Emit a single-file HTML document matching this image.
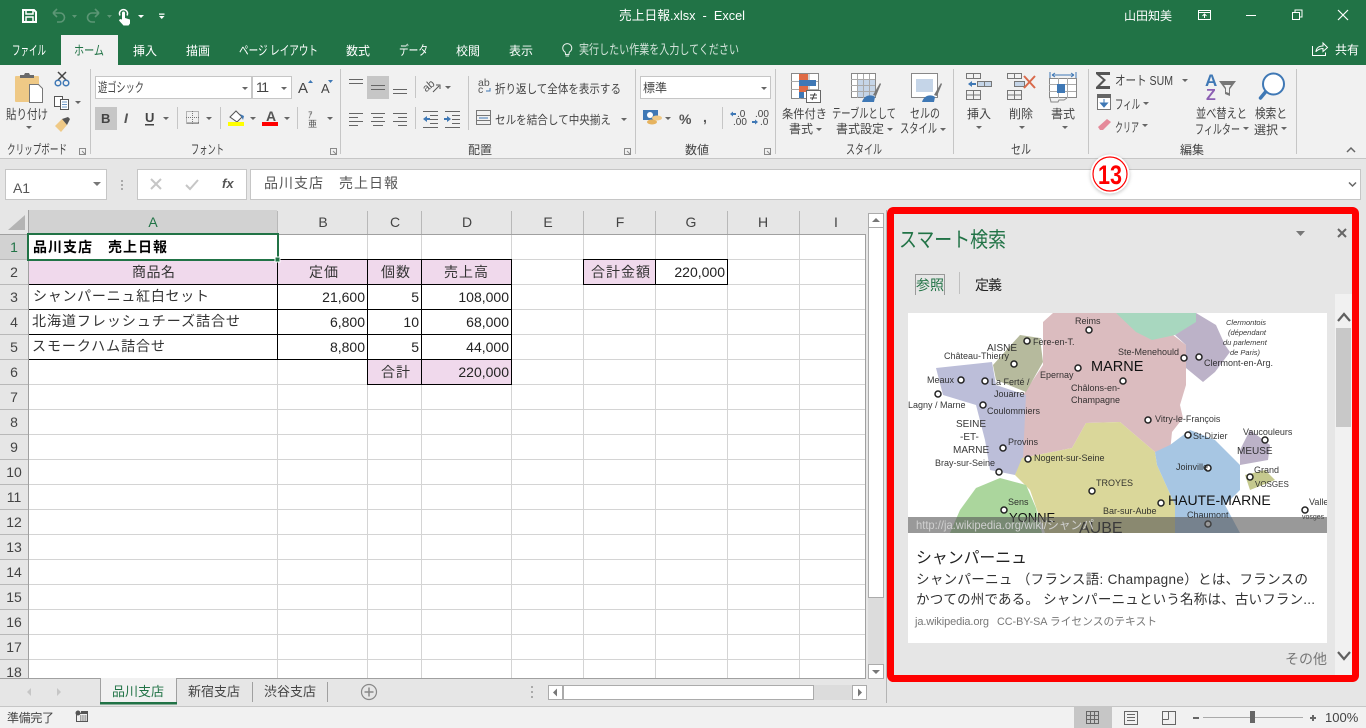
<!DOCTYPE html>
<html lang="ja"><head><meta charset="utf-8"><title>売上日報.xlsx - Excel</title>
<style>
html,body{margin:0;padding:0;width:1366px;height:728px;overflow:hidden;background:#e6e6e6}
svg{display:block;position:absolute;left:0;top:0}
text{font-family:"Liberation Sans","Noto Sans CJK JP",sans-serif;white-space:pre}
.r text{fill:#444;font-size:12px}
.r text.k{font-size:13px}
.c text{fill:#333;font-size:14px}
.n{text-anchor:end;font-size:14px;fill:#222}
.h text{fill:#444;font-size:14px;text-anchor:middle}
.m text{fill:#222;font-size:9px;opacity:.9}
</style></head><body>
<svg width="1366" height="728" viewBox="0 0 1366 728" xmlns="http://www.w3.org/2000/svg">
<defs>
<clipPath id="mapc"><rect x="908" y="313" width="419" height="220"/></clipPath>
<clipPath id="gridc"><rect x="0" y="210" width="866" height="468"/></clipPath>
<filter id="sh" x="-30%" y="-30%" width="160%" height="160%"><feGaussianBlur stdDeviation="1.5"/></filter>
<filter id="bl"><feGaussianBlur stdDeviation="0.35"/></filter>
</defs>
<!-- base -->
<rect width="1366" height="65" fill="#217346"/>
<rect y="65" width="1366" height="93" fill="#f1f1f1"/>
<rect y="158" width="1366" height="1" fill="#c6c6c6"/>
<rect y="159" width="1366" height="547" fill="#e6e6e6"/>

<!-- quick access -->
<g fill="none" stroke="#fff" stroke-width="2">
<path d="M23 10h11l2 2v10H23z"/><path d="M26 10v4h7v-4M26 22v-5h7v5" stroke-width="1.500"/>
</g>
<g fill="none" stroke="#5c9675" stroke-width="1.600">
<path d="M53 13l4-4M53 13l4 4M53 13h7a4.500 4.500 0 0 1 0 9h-3"/>
<path d="M99 13l-4-4M99 13l-4 4M99 13h-7a4.500 4.500 0 0 0 0 9h3"/>
</g>
<path d="M72 15h5l-2.500 3zM107 15h5l-2.500 3z" fill="#5c9675"/>
<path d="M122 13a1.500 1.500 0 0 1 3 0v5l5 1.500v4l-1.500 2h-5l-4.500-5 1-1.500 2 .5z" fill="#fff"/>
<path d="M120 15.500a4 4 0 1 1 7 0" fill="none" stroke="#fff" stroke-width="1.500"/>
<path d="M138 15h6l-3 3zM159 16h5.500l-2.750 3zM159 13.500h5.500v1.200H159z" fill="#fff"/>
<text x="619" y="20" font-size="13" fill="#fff" textLength="126" lengthAdjust="spacingAndGlyphs">売上日報.xlsx  -  Excel</text>
<text x="1124" y="20" font-size="12" fill="#fff" textLength="48">山田知美</text>
<g fill="none" stroke="#fff" stroke-width="1">
<rect x="1198.500" y="10.500" width="12" height="9"/><path d="M1198 12.500h13M1204.500 18v-4M1202.500 16l2-2 2 2"/>
<path d="M1246 15.500h10"/>
<rect x="1292.500" y="12.500" width="7" height="7"/><path d="M1295 12.500v-2.500h7v7h-2.500"/>
<path d="M1338 10l10 10M1348 10l-10 10" stroke-width="1.200"/>
</g>
<!-- tabs -->
<rect x="61" y="35" width="57" height="30" fill="#f1f1f1"/>
<g fill="#fff">
<text x="12" y="55" fill="#fff" font-size="13" textLength="34" lengthAdjust="spacingAndGlyphs">ファイル</text>
<text x="74" y="55" fill="#217346" font-size="13" textLength="30" lengthAdjust="spacingAndGlyphs">ホーム</text>
<text x="133" y="55" fill="#fff" font-size="12" textLength="24">挿入</text>
<text x="186" y="55" fill="#fff" font-size="12" textLength="24">描画</text>
<text x="239" y="55" fill="#fff" font-size="13" textLength="79" lengthAdjust="spacingAndGlyphs">ページ レイアウト</text>
<text x="346" y="55" fill="#fff" font-size="12" textLength="24">数式</text>
<text x="399" y="55" fill="#fff" font-size="13" textLength="29" lengthAdjust="spacingAndGlyphs">データ</text>
<text x="456" y="55" fill="#fff" font-size="12" textLength="24">校閲</text>
<text x="509" y="55" fill="#fff" font-size="12" textLength="24">表示</text>
<text x="579" y="54" fill="#d3e3da" font-size="13" textLength="160" lengthAdjust="spacingAndGlyphs">実行したい作業を入力してください</text>
<text x="1335" y="54" fill="#fff" font-size="12" textLength="24">共有</text>
</g>
<g fill="none" stroke="#e6efe9" stroke-width="1">
<path d="M565 52a4.500 4.500 0 1 1 4.500 0c-.5 .8-.5 1.500-.5 2.500h-3.500c0-1 0-1.700-.5-2.500zM565.500 56h3.500"/>
</g>
<g fill="none" stroke="#fff" stroke-width="1"><path d="M1312.500 46v9.500h13v-3M1316 52c0-4 3-6 7-6v-3l4.500 4.500-4.500 4v-3c-3 0-5 1-7 3z"/></g>

<!-- ribbon separators -->
<g fill="#c6c6c6">
<rect x="90" y="69" width="1" height="85"/><rect x="340" y="69" width="1" height="85"/><rect x="635" y="69" width="1" height="85"/><rect x="775" y="69" width="1" height="85"/><rect x="953" y="69" width="1" height="85"/><rect x="1088" y="69" width="1" height="85"/><rect x="1296" y="69" width="1" height="85"/>
<rect x="177" y="107" width="1" height="22"/><rect x="220" y="107" width="1" height="22"/><rect x="297" y="107" width="1" height="22"/>
<rect x="415" y="76" width="1" height="22"/><rect x="415" y="107" width="1" height="22"/><rect x="468" y="76" width="1" height="54"/><rect x="722" y="107" width="1" height="22"/>
</g>
<!-- clipboard -->
<rect x="15" y="76" width="24" height="26" rx="1" fill="#efc986"/>
<path d="M20 78v-3h4l1-2h4l1 2h4v3z" fill="#6a6a6a"/>
<path d="M29.500 84.500h9l4 4v14h-13z" fill="#fff" stroke="#777"/>
<g fill="none" stroke="#444" stroke-width="1.500"><path d="M58 72l8 8M66 72l-8 8"/></g>
<circle cx="58" cy="83" r="2.800" fill="none" stroke="#3f78b5" stroke-width="1.500"/><circle cx="66" cy="83" r="2.800" fill="none" stroke="#3f78b5" stroke-width="1.500"/>
<g fill="#fff" stroke="#555"><rect x="54.500" y="96.500" width="8" height="10"/><rect x="60.500" y="99.500" width="8" height="10"/></g>
<path d="M62 102h5M62 104.500h5M62 107h5" stroke="#3f78b5" stroke-width=".8"/>
<path d="M75 101h6l-3 3z" fill="#666"/>
<path d="M55 126l7-7 5 6-6 7z" fill="#efc986"/><path d="M62 119l6-2 2 2-3 6z" fill="#555"/>
<g class="r">
<text x="6" y="119" class="k" textLength="42" lengthAdjust="spacingAndGlyphs">貼り付け</text>
<text x="7" y="154" class="k" textLength="60" lengthAdjust="spacingAndGlyphs">クリップボード</text>
<text x="191" y="154" class="k" textLength="33" lengthAdjust="spacingAndGlyphs">フォント</text>
<text x="468" y="154" textLength="24">配置</text>
<text x="685" y="154" textLength="24">数値</text>
<text x="846" y="154" class="k" textLength="36" lengthAdjust="spacingAndGlyphs">スタイル</text>
<text x="1011" y="154" class="k" textLength="20" lengthAdjust="spacingAndGlyphs">セル</text>
<text x="1180" y="154" textLength="24">編集</text>
</g>
<path d="M26 126h6l-3 3z" fill="#666"/>
<g fill="none" stroke="#8a8a8a"><path d="M79.500 148.500h6v6h-6zM82 151l3 3"/><path d="M330.500 148.500h6v6h-6zM333 151l3 3"/><path d="M624.500 148.500h6v6h-6zM627 151l3 3"/><path d="M764.500 148.500h6v6h-6zM767 151l3 3"/></g>

<!-- font -->
<rect x="95.500" y="76.500" width="156" height="22" fill="#fff" stroke="#c6c6c6"/>
<rect x="252.500" y="76.500" width="39" height="22" fill="#fff" stroke="#c6c6c6"/>
<g class="r">
<text x="98" y="92" class="k" textLength="46" lengthAdjust="spacingAndGlyphs">遊ゴシック</text>
<text x="256" y="92" style="font-size:14px" textLength="13">11</text>
<text x="298" y="93" style="font-size:15px" textLength="11">A</text>
<text x="321" y="93" style="font-size:13px" textLength="9">A</text>
</g>
<path d="M242 87h6l-3 3zM281 87h6l-3 3z" fill="#666"/><path d="M308 83h5l-2.500-3zM328 80h5l-2.500 3z" fill="#3f78b5"/>
<rect x="95" y="107" width="22" height="23" fill="#c6c6c6"/>
<text x="101" y="123" font-size="13" font-weight="bold" fill="#444">B</text>
<text x="124" y="123" font-size="14" font-style="italic" font-weight="bold" font-family="Liberation Serif" fill="#555">I</text>
<text x="145" y="122" font-size="13" font-weight="bold" fill="#444">U</text>
<rect x="145" y="124" width="9" height="1.500" fill="#444"/>
<path d="M163 117h6l-3 3zM206 117h6l-3 3zM250 117h6l-3 3zM284 117h6l-3 3zM327 117h6l-3 3z" fill="#666"/>
<rect x="186.500" y="111.500" width="12" height="12" fill="none" stroke="#777" stroke-dasharray="1 1"/><path d="M192.500 111v13M186 117.500h13" stroke="#777" stroke-dasharray="1 1"/><rect x="186" y="122.500" width="13" height="1" fill="#777"/>
<path d="M230 117l6-6 6 6-5 5z" fill="#fff" stroke="#555"/><path d="M240 114l4 2-1 4z" fill="#3f78b5"/>
<rect x="228" y="122" width="16" height="4" fill="#ffff00"/>
<text x="266" y="121" font-size="14" fill="#555" font-weight="bold">A</text>
<rect x="262" y="122" width="16" height="4" fill="#f00"/>
<text x="308" y="118" font-size="9" fill="#555">ｱ</text><text x="308" y="127" font-size="9" fill="#555">亜</text>

<!-- alignment -->
<rect x="367" y="76" width="22" height="23" fill="#c6c6c6"/>
<g fill="none" stroke="#666" stroke-width="1">
<path d="M349 79.500h14M349 83.500h14M371 85.500h14M371 89.500h14M393 89.500h14M393 93.500h14"/>
<path d="M349 113.500h14M349 117.500h9M349 121.500h14M349 125.500h9"/>
<path d="M371 113.500h14M373 117.500h10M371 121.500h14M373 125.500h10"/>
<path d="M393 113.500h14M398 117.500h9M393 121.500h14M398 125.500h9"/>
<path d="M423 111.500h15M430 115.500h8M430 119.500h8M430 123.500h8M423 127.500h15"/>
<path d="M445 111.500h15M452 115.500h8M452 119.500h8M452 123.500h8M445 127.500h15"/>
</g>
<path d="M423 119l4-3v2h3v2h-3v2zM451 119l-4-3v2h-3v2h3v2z" fill="#3f78b5"/>
<text x="423" y="90" font-size="11" fill="#555" transform="rotate(-40 428 87)">ab</text>
<path d="M433 92l6-6M436 85h4v4" fill="none" stroke="#555"/>
<path d="M445 86h6l-3 3zM621 118h6l-3 3z" fill="#666"/>
<text x="478" y="86" font-size="10.500" fill="#555">ab</text><text x="478" y="93" font-size="10.500" fill="#555">c</text><path d="M490 88v3h-4" fill="none" stroke="#3f78b5"/>
<rect x="476.500" y="110.500" width="14" height="14" fill="none" stroke="#777"/><path d="M477 115.500h13M477 120.500h13" stroke="#777"/>
<rect x="478" y="116" width="11" height="4" fill="#f1f1f1"/><path d="M479 118h9" stroke="#3f78b5"/>
<g class="r">
<text x="495" y="93" textLength="126" lengthAdjust="spacingAndGlyphs">折り返して全体を表示する</text>
<text x="495" y="124" textLength="116" lengthAdjust="spacingAndGlyphs">セルを結合して中央揃え</text>
</g>

<!-- number -->
<rect x="640.500" y="76.500" width="130" height="22" fill="#fff" stroke="#c6c6c6"/>
<text x="643" y="92" font-size="12" fill="#444" textLength="24">標準</text>
<path d="M761 87h6l-3 3zM665 117h6l-3 3z" fill="#666"/>
<rect x="643" y="110" width="15" height="10" fill="#3f78b5"/><circle cx="650" cy="115" r="3" fill="#fff"/>
<ellipse cx="652" cy="122" rx="5" ry="2.500" fill="#e6b35f"/><ellipse cx="657" cy="118" rx="5" ry="2.500" fill="#efc986"/>
<text x="679" y="124" font-size="14" fill="#555" font-weight="bold">%</text>
<text x="703" y="122" font-size="14" fill="#555" font-weight="bold">,</text>
<text x="737" y="117" font-size="10" fill="#444">.0</text><text x="733" y="125" font-size="10" fill="#444">.00</text>
<path d="M730 114l3-2.500v1.500h3v2h-3v1.500z" fill="#3f78b5"/>
<text x="755" y="117" font-size="10" fill="#444">.00</text><text x="760" y="125" font-size="10" fill="#444">.0</text>
<path d="M758 122l-3-2.500v1.500h-3v2h3v1.500z" fill="#3f78b5"/>

<!-- styles -->
<rect x="791.500" y="73.500" width="27" height="25" fill="#fff" stroke="#888"/>
<path d="M791 81.500h27M791 89.500h27M800 74v25M809 74v25" stroke="#aaa"/>
<rect x="799" y="74" width="9" height="7" fill="#df6b45"/><rect x="799" y="80" width="17" height="6" fill="#3f78b5"/><rect x="799" y="86" width="9" height="6" fill="#df6b45"/><rect x="799" y="92" width="5" height="6" fill="#3f78b5"/>
<rect x="806.500" y="90.500" width="14" height="12" fill="#fff" stroke="#666"/><path d="M810 95h7M810 98h7M812 100l3-7" stroke="#444" fill="none"/>
<rect x="851.500" y="73.500" width="24" height="24" fill="#fff" stroke="#888"/><rect x="857" y="79" width="18" height="18" fill="#c5d5e8"/><path d="M851 79.500h24M851 85.500h24M851 91.500h24M857.500 74v24M863.500 74v24M869.500 74v24" stroke="#aaa"/>
<path d="M873 95l7-12 1 1-5 12z" fill="#777"/><path d="M862 102c2-7 9-8 13-5l-1 5z" fill="#3f78b5"/>
<rect x="911.500" y="73.500" width="26" height="24" fill="#fff" stroke="#888"/><rect x="916" y="79" width="17" height="13" fill="#c5d5e8"/>
<path d="M934 95l7-12 1 1-5 12z" fill="#777"/><path d="M922 102c2-7 9-8 13-5l-1 5z" fill="#3f78b5"/>
<g class="r">
<text x="782" y="118" textLength="45" lengthAdjust="spacingAndGlyphs">条件付き</text>
<text x="789" y="133" textLength="24">書式</text>
<text x="832" y="118" class="k" textLength="64" lengthAdjust="spacingAndGlyphs">テーブルとして</text>
<text x="836" y="133" textLength="48">書式設定</text>
<text x="910" y="118" class="k" textLength="30" lengthAdjust="spacingAndGlyphs">セルの</text>
<text x="900" y="133" class="k" textLength="37" lengthAdjust="spacingAndGlyphs">スタイル</text>
<text x="967" y="118" textLength="24">挿入</text>
<text x="1009" y="118" textLength="24">削除</text>
<text x="1051" y="118" textLength="24">書式</text>
<text x="1115" y="85" class="k" textLength="58" lengthAdjust="spacingAndGlyphs">オート SUM</text>
<text x="1115" y="109" class="k" textLength="25" lengthAdjust="spacingAndGlyphs">フィル</text>
<text x="1115" y="132" class="k" textLength="24" lengthAdjust="spacingAndGlyphs">クリア</text>
<text x="1196" y="118" class="k" textLength="51" lengthAdjust="spacingAndGlyphs">並べ替えと</text>
<text x="1195" y="134" class="k" textLength="45" lengthAdjust="spacingAndGlyphs">フィルター</text>
<text x="1255" y="118" class="k" textLength="32" lengthAdjust="spacingAndGlyphs">検索と</text>
<text x="1254" y="134" textLength="24">選択</text>
</g>
<g fill="#666"><path d="M816 128h6l-3 3zM887 128h6l-3 3zM940 128h6l-3 3zM976 126h6l-3 3zM1019 126h6l-3 3zM1062 126h6l-3 3zM1182 79h6l-3 3zM1143 102h6l-3 3zM1142 124h6l-3 3zM1243 127h6l-3 3zM1281 127h6l-3 3z"/></g>
<!-- cells icons -->
<g fill="#fff" stroke="#777">
<path d="M966.500 73.500h14v5h-14zM973.500 73.500v5" fill="none"/>
<path d="M966.500 90.500h14v9h-14zM973.500 90v9M966 95h14" fill="none"/>
<rect x="977.500" y="81.500" width="14" height="5" fill="#c5d5e8"/><path d="M984.500 82v4" fill="none"/>
<path d="M1007.500 73.500h14v5h-14zM1014.500 73.500v5" fill="none"/>
<path d="M1007.500 90.500h14v9h-14zM1014.500 90v9M1007 95h14" fill="none"/>
<rect x="1014.500" y="81.500" width="10" height="5" fill="#c5d5e8"/>
</g>
<path d="M968 84l4-3v2h4v2h-4v2z" fill="#3f78b5"/>
<path d="M1024 76l11 12M1035 76l-11 12" stroke="#d9694a" stroke-width="2" fill="none"/>
<rect x="1049.500" y="78.500" width="27" height="19" fill="#fff" stroke="#888"/><path d="M1049 84.500h27M1049 91.500h27M1058.500 78v20M1067.500 78v20" stroke="#aaa"/>
<rect x="1057" y="84" width="8" height="9" fill="#3f78b5"/>
<path d="M1050 98l1 4h7l1-2h5l3-2" fill="none" stroke="#888"/>
<path d="M1050 72v6M1076 72v6M1052 75h22M1052 75l3-2M1052 75l3 2M1074 75l-3-2M1074 75l-3 2" stroke="#3f78b5" fill="none"/>
<!-- editing -->
<path d="M1110 72h-14v2l7 6-7 7v2h14v-3h-10l6-6-6-5h10z" fill="#555"/>
<rect x="1097.500" y="95.500" width="13" height="14" fill="#fff" stroke="#777"/><rect x="1097" y="94" width="14" height="4" fill="#666"/>
<path d="M1104 99v5M1100.500 103l3.500 4 3.500-4z" stroke="#3f78b5" fill="#3f78b5"/>
<path d="M1098 127l9-8 4 3-8 8h-3z" fill="#e58a9a"/>
<text x="1205" y="86" font-size="17" font-weight="bold" fill="#3f78b5">A</text>
<text x="1206" y="100" font-size="16" font-weight="bold" fill="#8c5fb3">Z</text>
<path d="M1219 81h17l-6 8v7l-5-2v-5z" fill="#777"/><path d="M1224 85h7l-2 3v5l-3-1v-4z" fill="#f1f1f1"/>
<circle cx="1273.500" cy="84" r="10.500" fill="#fff" stroke="#3f78b5" stroke-width="2"/>
<path d="M1265.500 92l-5 6" stroke="#3f78b5" stroke-width="3.500" stroke-linecap="round"/>
<path d="M1347 152l4-4 4 4" fill="none" stroke="#666" stroke-width="1.500"/>

<!-- formula bar -->
<rect x="5.500" y="169.500" width="101" height="30" fill="#fff" stroke="#c6c6c6"/>
<rect x="137.500" y="169.500" width="109" height="30" fill="#fff" stroke="#c6c6c6"/>
<rect x="250.500" y="169.500" width="1110" height="30" fill="#fff" stroke="#c6c6c6"/>
<text x="13" y="193" font-size="14" fill="#555" textLength="17">A1</text>
<path d="M93 182h8l-4 4z" fill="#777"/>
<path d="M121 180h2v2h-2zM121 184h2v2h-2zM121 188h2v2h-2z" fill="#aaa"/>
<path d="M151 179l10 10M161 179l-10 10M186 185l4 4 8-9" fill="none" stroke="#c6c6c6" stroke-width="2"/>
<text x="222" y="188" font-size="13" font-style="italic" font-weight="bold" font-family="Liberation Serif" fill="#555">fx</text>
<text x="264" y="188" font-size="14" fill="#555" textLength="134">品川支店　売上日報</text>
<path d="M1349 182.500l3.500 3.500 3.500-3.500" fill="none" stroke="#666" stroke-width="1.500"/>

<!-- grid -->
<rect x="29" y="235" width="836" height="443" fill="#fff"/>
<rect x="29" y="210" width="248" height="25" fill="#d2d2d2"/>
<rect x="0" y="235" width="28" height="25" fill="#d2d2d2"/>
<path d="M25 215v15H8z" fill="#b4b4b4"/>
<g clip-path="url(#gridc)" stroke="#d4d4d4" fill="none">
<path d="M277.500 235v443M367.500 235v443M421.500 235v443M511.500 235v443M583.500 235v443M655.500 235v443M727.500 235v443M799.500 235v443"/>
<path d="M29 259.500h836M29 284.500h836M29 309.500h836M29 334.500h836M29 359.500h836M29 384.500h836M29 409.500h836M29 434.500h836M29 459.500h836M29 484.500h836M29 509.500h836M29 534.500h836M29 559.500h836M29 584.500h836M29 609.500h836M29 634.500h836M29 659.500h836"/>
</g>
<g stroke="#b8b8b8" fill="none">
<path d="M277.500 211v23M367.500 211v23M421.500 211v23M511.500 211v23M583.500 211v23M655.500 211v23M727.500 211v23M799.500 211v23"/>
<path d="M0 259.500h28M0 284.500h28M0 309.500h28M0 334.500h28M0 359.500h28M0 384.500h28M0 409.500h28M0 434.500h28M0 459.500h28M0 484.500h28M0 509.500h28M0 534.500h28M0 559.500h28M0 584.500h28M0 609.500h28M0 634.500h28M0 659.500h28"/>
</g>
<path d="M0 234.500h865.500v443.500M28.500 210v468" stroke="#a0a0a0" fill="none"/>
<!-- coloured cells -->
<g fill="#f0d9ec">
<rect x="29" y="260" width="248" height="25"/><rect x="278" y="260" width="89" height="25"/><rect x="368" y="260" width="53" height="25"/><rect x="422" y="260" width="89" height="25"/><rect x="368" y="360" width="53" height="25"/><rect x="422" y="360" width="89" height="25"/><rect x="584" y="260" width="71" height="25"/>
</g>
<g stroke="#000" fill="none">
<path d="M29 284.500h483M29 309.500h483M29 334.500h483M29 359.500h483M367 384.500h145M277.500 260v100M367.500 260v125M421.500 260v125M511.500 260v125M367 259.500h145"/>
<path d="M278 259.500h90"/>
<rect x="583.500" y="259.500" width="144" height="25"/><path d="M655.500 260v24"/>
</g>
<rect x="28" y="234" width="250" height="26" fill="none" stroke="#217346" stroke-width="2"/>
<rect x="275" y="257" width="5" height="5" fill="#217346" stroke="#fff" stroke-width="1"/>
<!-- headers -->
<g class="h">
<text x="153" y="227" style="fill:#217346">A</text><text x="323" y="227">B</text><text x="395" y="227">C</text><text x="467" y="227">D</text><text x="548" y="227">E</text><text x="620" y="227">F</text><text x="691" y="227">G</text><text x="763" y="227">H</text><text x="836" y="227">I</text>
<text x="14" y="252" style="fill:#217346">1</text><text x="14" y="277">2</text><text x="14" y="302">3</text><text x="14" y="327">4</text><text x="14" y="352">5</text><text x="14" y="377">6</text><text x="14" y="402">7</text><text x="14" y="427">8</text><text x="14" y="452">9</text><text x="14" y="477">10</text><text x="14" y="502">11</text><text x="14" y="527">12</text><text x="14" y="552">13</text><text x="14" y="577">14</text><text x="14" y="602">15</text><text x="14" y="627">16</text><text x="14" y="652">17</text><text x="14" y="677">18</text>
</g>
<g class="c">
<text x="33" y="252" font-weight="bold" style="fill:#000" textLength="134">品川支店　売上日報</text>
<text x="132" y="277" textLength="43">商品名</text>
<text x="309" y="277" textLength="29">定価</text>
<text x="381" y="277" textLength="29">個数</text>
<text x="444" y="277" textLength="44">売上高</text>
<text x="33" y="301" textLength="176">シャンパーニュ紅白セット</text>
<text x="32" y="326" textLength="208">北海道フレッシュチーズ詰合せ</text>
<text x="32" y="351" textLength="133">スモークハム詰合せ</text>
<text x="381" y="377" textLength="29">合計</text>
<text x="591" y="277" textLength="59">合計金額</text>
</g>
<g>
<text class="n" x="365" y="302">21,600</text><text class="n" x="419" y="302">5</text><text class="n" x="509" y="302">108,000</text>
<text class="n" x="365" y="327">6,800</text><text class="n" x="419" y="327">10</text><text class="n" x="509" y="327">68,000</text>
<text class="n" x="365" y="352">8,800</text><text class="n" x="419" y="352">5</text><text class="n" x="509" y="352">44,000</text>
<text class="n" x="509" y="377">220,000</text><text class="n" x="725" y="277">220,000</text>
</g>
<!-- v scroll -->
<rect x="868" y="213" width="16" height="451" fill="#dcdcdc"/>
<rect x="868.500" y="213.500" width="15" height="14" fill="#fff" stroke="#ababab"/>
<rect x="868.500" y="227.500" width="15" height="370" fill="#fff" stroke="#ababab"/>
<rect x="868.500" y="664.500" width="15" height="14" fill="#fff" stroke="#ababab"/>
<path d="M872 222h8l-4-4zM872 670h8l-4 4z" fill="#777"/>

<!-- sheet tabs -->
<rect x="0" y="678" width="866" height="1" fill="#a0a0a0"/>
<rect x="100" y="678" width="77" height="25" fill="#f1f1f1"/>
<path d="M100.500 678v25M176.500 678v25" stroke="#a0a0a0"/>
<rect x="100" y="702" width="77" height="2.500" fill="#217346"/>
<path d="M252.500 682v20M327.500 682v20" stroke="#a0a0a0"/>
<path d="M31 688v8l-4-4zM57 688v8l4-4z" fill="#c6c6c6"/>
<text x="112" y="696" font-size="13" fill="#217346" textLength="52">品川支店</text>
<text x="188" y="696" font-size="13" fill="#444" textLength="52">新宿支店</text>
<text x="264" y="696" font-size="13" fill="#444" textLength="52">渋谷支店</text>
<circle cx="369" cy="692" r="7.500" fill="none" stroke="#888" stroke-width="1.200"/><path d="M369 687.500v9M364.500 692h9" stroke="#888" stroke-width="1.500"/>
<path d="M531 686h2v2h-2zM531 691h2v2h-2zM531 696h2v2h-2z" fill="#aaa"/>
<!-- h scroll -->
<rect x="548" y="685" width="304" height="15" fill="#dcdcdc"/>
<rect x="548.500" y="685.500" width="14" height="14" fill="#fff" stroke="#ababab"/>
<rect x="563.500" y="685.500" width="250" height="14" fill="#fff" stroke="#ababab"/>
<rect x="852.500" y="685.500" width="14" height="14" fill="#fff" stroke="#ababab"/>
<path d="M557 688.500v8l-4-4zM858 688.500v8l4-4z" fill="#777"/>
<rect x="886" y="210" width="1" height="493" fill="#b4b4b4"/>

<!-- status -->
<rect y="706" width="1366" height="22" fill="#f1f1f1"/>
<rect y="706" width="1366" height="1" fill="#c6c6c6"/>
<text x="7" y="722" font-size="12" fill="#444" textLength="47">準備完了</text>
<circle cx="78" cy="713" r="2.500" fill="#555"/><rect x="76.500" y="713.500" width="11" height="8" fill="none" stroke="#555"/><path d="M80 716h7M80 718h7M80 720h7" stroke="#555" stroke-dasharray="1.500 .7"/><rect x="81" y="711" width="7" height="2" fill="#555"/>
<rect x="1074" y="706" width="38" height="22" fill="#c6c6c6"/>
<g fill="none" stroke="#666"><rect x="1086.500" y="711.500" width="12" height="12"/><path d="M1086 715.500h13M1086 719.500h13M1090.500 711v13M1094.500 711v13"/>
<rect x="1124.500" y="711.500" width="13" height="13"/><path d="M1127 714.500h8M1127 717.500h8M1127 720.500h8"/>
<path d="M1162.500 711.500h13v13h-13zM1162 719.500h6.500M1168.500 711v8.500"/></g>
<rect x="1193" y="717" width="6" height="2" fill="#666"/>
<rect x="1203" y="717" width="100" height="1" fill="#aaa"/>
<rect x="1250" y="711" width="5" height="12" fill="#666"/>
<path d="M1310 718h6M1313 715v6" stroke="#666" stroke-width="2"/>
<text x="1325" y="722" font-size="13" fill="#444">100%</text>

<!-- panel -->
<rect x="890" y="210" width="466" height="469" rx="3" fill="#e6e6e6"/>
<rect x="1335" y="294" width="17" height="381" fill="#f1f1f1"/>
<rect x="1336" y="328" width="15" height="99" fill="#c8c8c8"/>
<path d="M1338 321l6-7 6 7M1338 652l6 7 6-7" fill="none" stroke="#606060" stroke-width="2.200"/>
<text x="899" y="247" font-size="21" fill="#217346" textLength="107" lengthAdjust="spacingAndGlyphs">スマート検索</text>
<path d="M1296 231h9l-4.500 5z" fill="#777"/>
<path d="M1338 229l8 8M1346 229l-8 8" stroke="#666" stroke-width="2"/>
<rect x="915.500" y="274.500" width="29" height="20" fill="none" stroke="#999"/>
<rect x="916" y="293" width="28" height="2" fill="#e6e6e6"/>
<path d="M959.500 272v22" stroke="#c0c0c0"/>
<text x="916" y="290" font-size="14" fill="#217346" textLength="28">参照</text>
<text x="975" y="290" font-size="14" fill="#222" textLength="27">定義</text>
<rect x="908" y="313" width="419" height="330" fill="#fff"/>
<!-- map -->
<g clip-path="url(#mapc)">
<g filter="url(#bl)">
<path fill="#dbbcbf" d="M1043 322l10-9h63l34 14 23 8 13 10v40l-6 20 3 13-11 14-2 20h-15l-35-30-34 1-14 25-50 10 1-63 20-30z"/>
<path fill="#a8d7bf" d="M1116 313h80v10l-21 12-23 5-16-8z"/>
<path fill="#bcb2c8" d="M1196 313l20 12 9 20 5 7-15 20-12 10-17-14v-23l-11-10 21-13z"/>
<path fill="#bcbed9" d="M936 368l56-6 4 23 30 10-3 63-8 17-25-5-5-30-9-35-33-10z"/>
<path fill="#b6ba9d" d="M993 365l27-30 20 3 3 24-17 30-30-12z"/>
<path fill="#dad79a" d="M1072 448l14-25 34-1 35 30 2 13 18 40v28h-130l-15-43-15-15 7-17z"/>
<path fill="#a7c6e3" d="M1155 452l15-7 20-15 25 10 25 25v25l-15 15 15 28h-65v-28l-18-40z"/>
<path fill="#abd69d" d="M976 488l24-10 26 7 10 23 6 25h-92l10-23z"/>
<path fill="#bcb2c8" d="M1240 450l10-20 20 15-2 15-28 5z"/>
<path fill="#c5c98e" d="M1245 475l20-5 10 10-25 10z"/>
</g>
<g fill="#fff" stroke="#222" stroke-width="1.500">
<circle cx="1089" cy="330" r="3"/><circle cx="1027" cy="341" r="3"/><circle cx="1014" cy="364" r="3"/><circle cx="1078" cy="368" r="3"/><circle cx="1184" cy="358" r="3"/><circle cx="1199" cy="357" r="3"/><circle cx="961" cy="380" r="3"/><circle cx="985" cy="381" r="3"/><circle cx="938" cy="394" r="3"/><circle cx="983" cy="405" r="3"/><circle cx="1123" cy="381" r="3"/><circle cx="1148" cy="420" r="3"/><circle cx="1188" cy="435" r="3"/><circle cx="1265" cy="440" r="3"/><circle cx="1003" cy="448" r="3"/><circle cx="1028" cy="459" r="3"/><circle cx="999" cy="472" r="3"/><circle cx="1092" cy="491" r="3"/><circle cx="1161" cy="503" r="3"/><circle cx="1004" cy="510" r="3"/><circle cx="1208" cy="468" r="3"/><circle cx="1250" cy="477" r="3"/><circle cx="1305" cy="510" r="3"/><circle cx="1208" cy="524" r="3"/>
</g>
<g class="m">
<text x="1075" y="324">Reims</text><text x="1033" y="345">Fère-en-T.</text><text x="987" y="351" style="font-size:10px">AISNE</text><text x="944" y="359">Château-Thierry</text>
<text x="1091" y="371" style="font-size:14.500px;opacity:1;fill:#111">MARNE</text><text x="1118" y="355">Ste-Menehould</text><text x="1204" y="366">Clermont-en-Arg.</text>
<text x="1226" y="325" font-style="italic" style="font-size:7.500px">Clermontois</text><text x="1228" y="335" font-style="italic" style="font-size:7.500px">(dépendant</text><text x="1223" y="345" font-style="italic" style="font-size:7.500px">du parlement</text><text x="1230" y="355" font-style="italic" style="font-size:7.500px">de Paris)</text>
<text x="927" y="383">Meaux</text><text x="991" y="385">La Ferté /</text><text x="994" y="397">Jouarre</text><text x="1040" y="378">Epernay</text><text x="1071" y="391">Châlons-en-</text><text x="1071" y="403">Champagne</text>
<text x="908" y="408">Lagny / Marne</text><text x="987" y="414">Coulommiers</text>
<text x="956" y="427" style="font-size:10px">SEINE</text><text x="960" y="440" style="font-size:10px">-ET-</text><text x="953" y="453" style="font-size:10px">MARNE</text><text x="1008" y="445">Provins</text><text x="935" y="466">Bray-sur-Seine</text><text x="1034" y="461">Nogent-sur-Seine</text>
<text x="1155" y="422">Vitry-le-François</text><text x="1193" y="439">St-Dizier</text><text x="1243" y="435">Vaucouleurs</text><text x="1237" y="454" style="font-size:10px">MEUSE</text><text x="1254" y="473">Grand</text><text x="1255" y="487" style="font-size:8px">VOSGES</text>
<text x="1096" y="486">TROYES</text><text x="1103" y="514">Bar-sur-Aube</text><text x="1168" y="505" style="font-size:14px;opacity:1;fill:#111">HAUTE-MARNE</text><text x="1008" y="505">Sens</text><text x="1009" y="522" style="font-size:13px;opacity:1;fill:#111">YONNE</text><text x="1079" y="533" style="font-size:16px;opacity:1;fill:#111">AUBE</text><text x="1187" y="518">Chaumont</text><text x="1309" y="505">Valle</text><text x="1302" y="519" style="font-size:7px">vosges</text><text x="1176" y="470">Joinville</text>
</g>
</g>
<rect x="908" y="517" width="419" height="16" fill="#555" fill-opacity=".6"/>
<text x="916" y="529" font-size="12" fill="#d0d0d0" textLength="105" lengthAdjust="spacingAndGlyphs">http://ja.wikipedia.org</text>
<text x="1021" y="529" font-size="12" fill="#d0d0d0" textLength="73" lengthAdjust="spacingAndGlyphs">/wiki/シャンパ</text>
<text x="916" y="563" font-size="16" fill="#222" textLength="111" lengthAdjust="spacingAndGlyphs">シャンパーニュ</text>
<text x="916" y="584" font-size="13.500" fill="#333" textLength="392">シャンパーニュ （フランス語: Champagne）とは、フランスの</text>
<text x="916" y="604" font-size="13.500" fill="#333" textLength="399">かつての州である。 シャンパーニュという名称は、古いフラン...</text>
<text x="915" y="625" font-size="11" fill="#777" textLength="74">ja.wikipedia.org</text>
<text x="997" y="625" font-size="11" fill="#777" textLength="160" lengthAdjust="spacingAndGlyphs">CC-BY-SA ライセンスのテキスト</text>
<text x="1285" y="664" font-size="14" fill="#777" textLength="42">その他</text>
<!-- red frame -->
<rect x="890.500" y="210.500" width="465" height="468" rx="3" fill="none" stroke="#f00" stroke-width="7"/>
<!-- callout -->
<circle cx="1110" cy="175" r="20" fill="#888" opacity=".4" filter="url(#sh)"/>
<circle cx="1110" cy="174" r="19.500" fill="#fff"/>
<circle cx="1110" cy="174" r="17" fill="#fff" stroke="#f00" stroke-width="1.200"/>
<text x="1110" y="184" font-size="27" font-weight="bold" fill="#f00" text-anchor="middle" textLength="24" lengthAdjust="spacingAndGlyphs">13</text>
</svg>
</body></html>
